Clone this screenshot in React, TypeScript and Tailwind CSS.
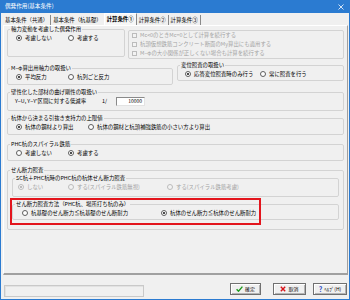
import React from "react";

const jp = "font-['Noto_Sans_CJK_JP','Noto_Sans',sans-serif]";

type RadioProps = { label: string; checked?: boolean; disabled?: boolean; className?: string };

function Radio({ label, checked, disabled, className = "" }: RadioProps) {
  return (
    <div className={`flex items-center gap-[3px] ${className}`}>
      <span
        className={`flex h-[6px] w-[6px] shrink-0 items-center justify-center rounded-full border ${
          disabled ? "border-[#bcbcbc] bg-[#f3f3f3]" : "border-[#5f5f5f] bg-white"
        }`}
      >
        {checked && <span className={`h-[2px] w-[2px] rounded-full ${disabled ? "bg-[#a8a8a8]" : "bg-[#111]"}`} />}
      </span>
      <span className={`whitespace-nowrap ${disabled ? "text-[#a3a3a3]" : "text-black"}`}>{label}</span>
    </div>
  );
}

function Check({ label }: { label: string }) {
  return (
    <div className="flex h-[9px] items-center gap-[3px]">
      <span className="h-[5px] w-[5px] shrink-0 border border-[#bcbcbc] bg-[#f3f3f3]" />
      <span className="whitespace-nowrap text-[#a3a3a3]">{label}</span>
    </div>
  );
}

function Group({ title, className = "", children }: { title: string; className?: string; children: React.ReactNode }) {
  return (
    <fieldset className={`min-w-0 rounded-[2px] border border-[#d3d3d3] ${className}`}>
      <legend className="ml-[2px] whitespace-nowrap px-[1px] leading-[7px]">{title}</legend>
      {children}
    </fieldset>
  );
}

function Btn({ icon, label, className = "" }: { icon: React.ReactNode; label: string; className?: string }) {
  return (
    <button
      className={`flex h-[12px] items-center justify-center gap-[2px] border border-[#707070] bg-[#f0f0f0] text-[5px] shadow-[inset_1px_1px_0_#fff,inset_-1px_-1px_0_#b4b4b4] ${className}`}
    >
      {icon}
      <span>{label}</span>
    </button>
  );
}

export default function App() {
  return (
    <div
      className={`flex h-[300px] w-[350px] flex-col overflow-hidden border-x border-b border-[#2b7bd1] bg-[#f0f0f0] text-[5.4px] text-black ${jp}`}
    >
      {/* title bar */}
      <div className="flex h-[13px] shrink-0 items-center justify-between bg-[#2b7bd1] pl-[4px] pr-[5px] text-white">
        <span className="text-[5.6px]">偶発作用(基本条件)</span>
        <svg width="6" height="6" viewBox="0 0 6 6">
          <path d="M0.5 0.5 L5.5 5.5 M5.5 0.5 L0.5 5.5" stroke="white" strokeWidth="0.8" />
        </svg>
      </div>

      {/* tabs */}
      <div className="flex h-[12px] shrink-0 items-end pl-[2px]">
        <div className="flex h-[10px] items-center border-r border-[#8a8a8a] px-[2px]">基本条件（共通）</div>
        <div className="flex h-[10px] items-center px-[2px]">基本条件（杭基礎）</div>
        <div className="flex h-[12px] items-center border-l border-t border-r border-l-white border-t-white border-r-[#8a8a8a] bg-[#f7f7f7] px-[2px] font-bold">
          計算条件①
        </div>
        <div className="flex h-[10px] items-center border-r border-[#8a8a8a] px-[2px]">計算条件②</div>
        <div className="flex h-[10px] items-center border-r border-[#8a8a8a] px-[2px]">計算条件③</div>
      </div>

      {/* tab page */}
      <div className="ml-[2px] mr-[1px] flex h-[250px] shrink-0 flex-col border-b-2 border-l border-r border-t border-b-[#a0a0a0] border-l-white border-r-[#a0a0a0] border-t-white pl-[3px] pr-[3px]">
        <div className="flex">
          <Group title="軸力変動を考慮した偶発作用" className="h-[31px] w-[118px] shrink-0">
            <div className="flex h-[10px] items-center pl-[8px]">
              <Radio label="考慮しない" checked className="w-[52px]" />
              <Radio label="考慮する" />
            </div>
          </Group>
          <div className="ml-[3px] mt-[4px] flex h-[29px] flex-1 flex-col rounded-[2px] border border-[#d3d3d3] pl-[3px]">
            <Check label="Mc<0のときMc=0として計算を続行する" />
            <Check label="杭頭仮想鉄筋コンクリート断面のMy算出にも適用する" />
            <Check label="M−φの大小関係が正しくない場合も計算を続行する" />
          </div>
        </div>

        <div className="mt-[3px] flex items-start">
          <Group title="M−φ算出用軸力の取扱い" className="mt-[3px] h-[20px] w-[166px] shrink-0">
            <div className="flex h-[10px] items-center pl-[8px]">
              <Radio label="平均反力" checked className="w-[52px]" />
              <Radio label="杭列ごと反力" />
            </div>
          </Group>
          <Group title="変位照査の取扱い" className="ml-[4px] h-[19px] flex-1">
            <div className="flex h-[10px] items-center pl-[7px]">
              <Radio label="応答変位照査時のみ行う" checked className="w-[75px]" />
              <Radio label="常に照査を行う" />
            </div>
          </Group>
        </div>

        <Group title="壁性化した部材の曲げ剛性の取扱い" className="mt-[4px] h-[22px]">
          <div className="flex h-[10px] items-center pl-[7px]">
            <span className="w-[87px] whitespace-nowrap">Y−U, Y−Y'区間に対する低減率</span>
            <span>1/</span>
            <div className="ml-[9px] flex h-[9px] w-[29px] items-center justify-end border border-b-[#e3e3e3] border-l-[#8a8a8a] border-r-[#e3e3e3] border-t-[#8a8a8a] bg-white pr-[2px] text-[5px]">
              10000
            </div>
          </div>
        </Group>

        <Group title="杭体から決まる引抜き支持力の上限値" className="mt-[4px] h-[20px]">
          <div className="flex h-[10px] items-center pl-[8px]">
            <Radio label="杭体の鋼材より算出" checked className="w-[72px]" />
            <Radio label="杭体の鋼材と杭頭補強鉄筋の小さい方より算出" />
          </div>
        </Group>

        <Group title="PHC杭のスパイラル鉄筋" className="mt-[6px] h-[20px]">
          <div className="flex h-[10px] items-center pl-[8px]">
            <Radio label="考慮しない" className="w-[52px]" />
            <Radio label="考慮する" checked />
          </div>
        </Group>

        <Group title="せん断力照査" className="mt-[6px] h-[63px]">
          <div className="flex flex-col px-[4px]">
            <Group title="SC杭＋PHC杭時のPHC杭の杭体せん断力照査" className="mt-[1px] h-[22px]">
              <div className="flex h-[11px] items-center pl-[5px]">
                <Radio label="しない" checked disabled className="w-[50px]" />
                <Radio label="する(スパイラル鉄筋無視)" disabled className="w-[99px]" />
                <Radio label="する(スパイラル鉄筋考慮)" disabled />
              </div>
            </Group>
            <div className="relative mt-[4px]">
              <Group title="せん断力照査方法（PHC杭、場所打ち杭のみ）" className="h-[19px]">
                <div className="flex h-[10px] items-center pl-[9px]">
                  <Radio label="杭基礎のせん断力≦杭基礎のせん断耐力" className="w-[139px]" />
                  <Radio label="杭体のせん断力≦杭体のせん断耐力" checked />
                </div>
              </Group>
              <div className="pointer-events-none absolute left-[-2px] top-[-3px] h-[27px] w-[251px] border-2 border-[#e3151d]" />
            </div>
          </div>
        </Group>
      </div>

      {/* footer */}
      <div className="flex flex-1 items-start">
        <div className="ml-[3px] mt-[10px] h-[12px] w-[140px] border border-[#c9c9c9] shadow-[inset_1px_1px_0_#e2e2e2]" />
        <div className="ml-auto mr-[2px] mt-[8px] flex">
          <Btn
            className="w-[31px] border-[#505050]"
            label="確定"
            icon={
              <svg width="7" height="6" viewBox="0 0 7 6">
                <path d="M0.6 3.2 L2.5 5.2 L6.4 0.6" fill="none" stroke="#1c9a1c" strokeWidth="1.4" />
              </svg>
            }
          />
          <Btn
            className="ml-[12px] w-[33px]"
            label="取消"
            icon={
              <svg width="6" height="6" viewBox="0 0 6 6">
                <path d="M0.8 0.8 L5.2 5.2 M5.2 0.8 L0.8 5.2" stroke="#d8141a" strokeWidth="1.4" />
              </svg>
            }
          />
          <Btn
            className="ml-[7px] w-[34px]"
            label="ﾍﾙﾌﾟ(H)"
            icon={<span className="text-[7px] font-bold leading-none text-[#1f44c4]">?</span>}
          />
        </div>
      </div>
    </div>
  );
}
